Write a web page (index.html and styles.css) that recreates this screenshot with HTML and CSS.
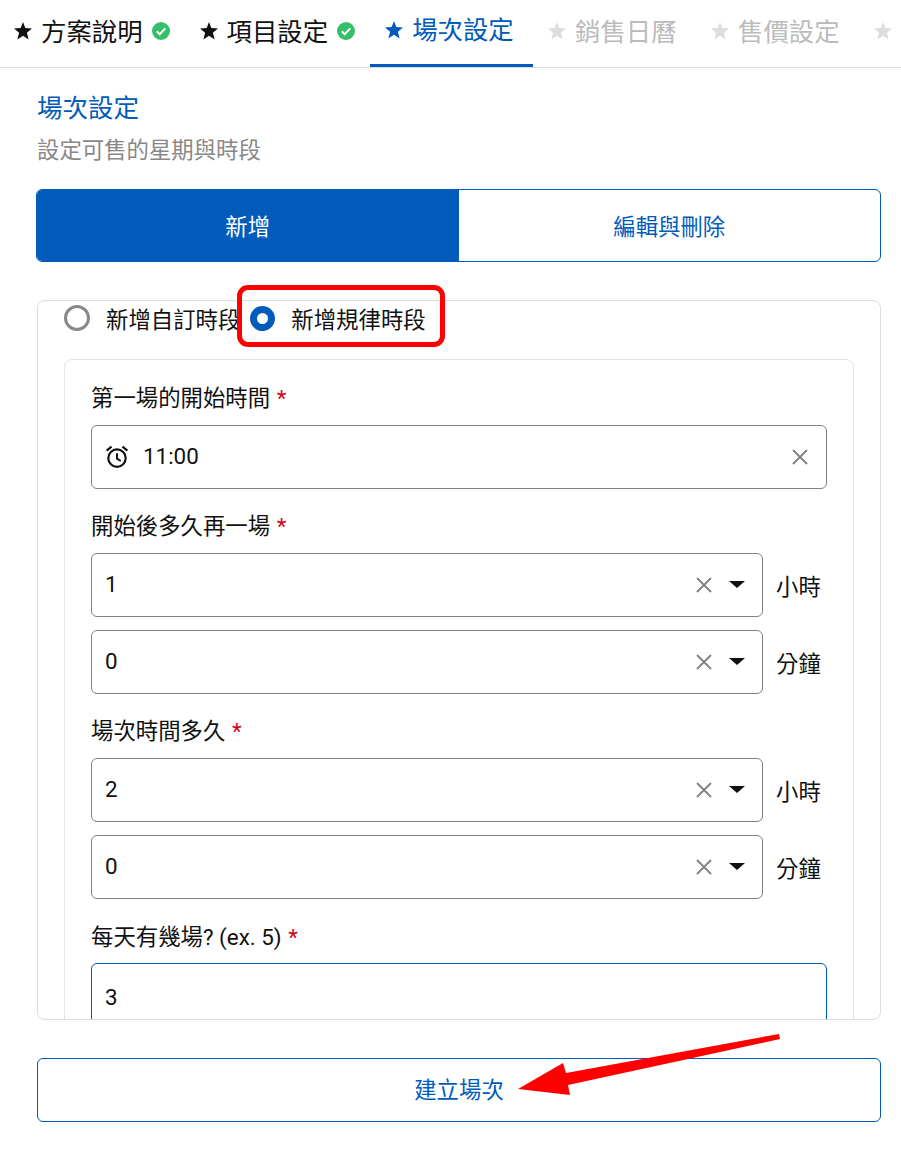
FILE: index.html
```html
<!DOCTYPE html>
<html lang="zh-Hant">
<head>
    <meta charset="UTF-8">
    <meta name="viewport" content="width=device-width, initial-scale=1.0">
    <title>場次設定</title>
    <link rel="stylesheet" href="styles.css">
</head>
<body>
    <svg class="defs" width="0" height="0">
        <symbol id="star" viewBox="0 0 18 18"><polygon points="9,0 11.3,6 18,6.4 12.9,10.7 14.6,17.5 9,13.8 3.4,17.5 5.1,10.7 0,6.4 6.7,6"/></symbol>
        <symbol id="check" viewBox="0 0 18 18"><circle cx="9" cy="9" r="9" fill="#36bf69"/><path d="M4.8 9.3l2.9 2.9 5.6-5.8" fill="none" stroke="#fff" stroke-width="2"/></symbol>
        <symbol id="cross" viewBox="0 0 16 16"><path d="M1 1l14 14M15 1L1 15" fill="none" stroke="#808080" stroke-width="1.8"/></symbol>
    </svg>

    <nav class="tabs">
        <div class="tab done"><svg class="star"><use href="#star"/></svg><span>方案說明</span><svg class="check"><use href="#check"/></svg></div>
        <div class="tab done"><svg class="star"><use href="#star"/></svg><span>項目設定</span><svg class="check"><use href="#check"/></svg></div>
        <div class="tab active"><svg class="star"><use href="#star"/></svg><span>場次設定</span></div>
        <div class="tab"><svg class="star"><use href="#star"/></svg><span>銷售日曆</span></div>
        <div class="tab"><svg class="star"><use href="#star"/></svg><span>售價設定</span></div>
        <div class="tab"><svg class="star"><use href="#star"/></svg></div>
    </nav>

    <main class="content">
        <h2 class="title">場次設定</h2>
        <p class="subtitle">設定可售的星期與時段</p>

        <div class="segment">
            <div class="segment-item on">新增</div>
            <div class="segment-item">編輯與刪除</div>
        </div>

        <section class="panel">
            <div class="radios">
                <label class="radio"><span class="dot"></span>新增自訂時段</label>
                <label class="radio"><span class="dot on"></span>新增規律時段</label>
            </div>
            <div class="card">
                <div class="field">
                    <div class="label">第一場的開始時間 <em>*</em></div>
                    <div class="input">
                        <svg class="clock" viewBox="1 1 22 22"><circle cx="12" cy="13" r="8" fill="none" stroke="#111" stroke-width="2"/><path d="M12 8.5V13.5l3.5 2.2" fill="none" stroke="#111" stroke-width="1.8"/><path d="M2.5 6.2L7 2.5M21.5 6.2L17 2.5" fill="none" stroke="#111" stroke-width="2"/></svg>
                        <span class="value">11:00</span>
                        <svg class="cross time-cross"><use href="#cross"/></svg>
                    </div>
                </div>
                <div class="field">
                    <div class="label">開始後多久再一場 <em>*</em></div>
                    <div class="select-row">
                        <div class="input"><span class="value">1</span><svg class="cross"><use href="#cross"/></svg><i class="caret"></i></div>
                        <span class="unit">小時</span>
                    </div>
                    <div class="select-row">
                        <div class="input"><span class="value">0</span><svg class="cross"><use href="#cross"/></svg><i class="caret"></i></div>
                        <span class="unit">分鐘</span>
                    </div>
                </div>
                <div class="field">
                    <div class="label">場次時間多久 <em>*</em></div>
                    <div class="select-row">
                        <div class="input"><span class="value">2</span><svg class="cross"><use href="#cross"/></svg><i class="caret"></i></div>
                        <span class="unit">小時</span>
                    </div>
                    <div class="select-row">
                        <div class="input"><span class="value">0</span><svg class="cross"><use href="#cross"/></svg><i class="caret"></i></div>
                        <span class="unit">分鐘</span>
                    </div>
                </div>
                <div class="field">
                    <div class="label label-latin">每天有幾場? (ex. 5) <em>*</em></div>
                    <div class="input focus"><span class="value">3</span></div>
                </div>
            </div>
        </section>

        <button class="create">建立場次</button>
    </main>

    <!-- annotations drawn over the screenshot -->
    <div class="highlight"></div>
    <svg class="arrow" width="901" height="1163" viewBox="0 0 901 1163"><polygon points="779,1034 780,1039 568,1085 570,1095 518,1089 563,1063 566,1073" fill="#ff0000"/></svg>
</body>
</html>
```
FILE: styles.css
```css
* {
    box-sizing: border-box;
}
body {
    margin: 0;
    height: 1163px;
    overflow: hidden;
    position: relative;
    background-color: white;
    color: #111;
    font-family: Roboto, "Noto Sans CJK TC", sans-serif;
    font-size: 22.4px;
}
.defs {
    position: absolute;
}
.tabs {
    display: flex;
    height: 68px;
    border-bottom: 1px solid #ddd;
    overflow: hidden;
}
.tab {
    flex: none;
    display: flex;
    align-items: center;
    height: 67px;
    padding: 0 19.4px 5px 15px;
    font-size: 25.4px;
    color: #bbb;
    fill: #ddd;
}
.tab span {
    margin-bottom: 3px;
}
.tab:first-child {
    padding-left: 14px;
}
.tab.done {
    color: #111;
    fill: #111;
    padding-right: 15px;
}
.tab.active {
    color: #005bbb;
    fill: #005bbb;
    border-bottom: 3px solid #005bbb;
    padding-bottom: 4px;
}
.tab.active span {
    margin-bottom: 5px;
}
.star {
    width: 18px;
    height: 18px;
    margin-right: 9px;
}
.check {
    width: 18px;
    height: 18px;
    margin-left: 9px;
}
.content {
    padding: 0 20px 0 36px;
}
.title {
    margin: 22px 0 0 1px;
    font-size: 25.5px;
    font-weight: 400;
    line-height: 36px;
    color: #005bbb;
}
.subtitle {
    margin: 8px 0 0 1px;
    padding-bottom: 1px;
    line-height: 32px;
    color: #888;
}
.segment {
    display: flex;
    height: 73px;
    margin-top: 22px;
    border: 1px solid #005bbb;
    border-radius: 6px;
    overflow: hidden;
    color: #005bbb;
}
.segment-item {
    flex: 1;
    display: flex;
    align-items: center;
    justify-content: center;
    padding-bottom: 2px;
}
.segment-item.on {
    background-color: #005bbb;
    color: white;
}
.panel {
    height: 720px;
    margin: 38px 0 0 1px;
    border: 1px solid #ddd;
    border-radius: 8px;
    overflow: hidden;
    padding: 4px 26px 0;
}
.radios {
    display: flex;
    gap: 10px;
    height: 54px;
}
.radio {
    display: flex;
    gap: 16px;
    height: 26px;
    align-items: center;
}
.dot {
    width: 26px;
    height: 26px;
    border: 3px solid #888;
    border-radius: 50%;
}
.dot.on {
    width: 25px;
    height: 25px;
    border: 7.5px solid #005bbb;
}
.card {
    border: 1px solid #e3e3e3;
    border-radius: 8px;
    padding: 22px 26px 0;
}
.field {
    margin-bottom: 21px;
}
.label {
    height: 32px;
    line-height: 32px;
    margin-bottom: 11px;
}
.label-latin {
    line-height: 35px;
}
.label em {
    font-style: normal;
    color: #d0021b;
    margin-left: 1px;
}
.input {
    display: flex;
    align-items: center;
    height: 64px;
    padding: 0 13px;
    border: 1px solid #808080;
    border-radius: 6px;
    flex: 1;
}
.input.focus {
    height: 70px;
    border-color: #005bbb;
}
.value {
    flex: 1;
    padding-bottom: 3px;
}
.clock {
    width: 24px;
    height: 24px;
    margin-right: 14px;
}
.cross {
    width: 16px;
    height: 16px;
}
.time-cross {
    margin-right: 5px;
}
.caret {
    width: 0;
    height: 0;
    margin: 0 4px 2px 17px;
    border-left: 8px solid transparent;
    border-right: 8px solid transparent;
    border-top: 7px solid #111;
}
.select-row {
    display: flex;
    align-items: center;
    gap: 13px;
}
.select-row + .select-row {
    margin-top: 13px;
}
.unit {
    width: 51px;
    padding-bottom: 1px;
}
.create {
    display: block;
    width: calc(100% - 1px);
    height: 64px;
    margin: 38px 0 0 1px;
    padding-bottom: 6px;
    background-color: white;
    border: 1px solid #005bbb;
    border-radius: 6px;
    color: #005bbb;
    font-family: inherit;
    font-size: 22.4px;
}
.highlight {
    position: absolute;
    left: 237px;
    top: 285px;
    width: 208px;
    height: 62px;
    border: 5px solid #ff0000;
    border-radius: 11px;
}
.arrow {
    position: absolute;
    left: 0;
    top: 0;
}
```
